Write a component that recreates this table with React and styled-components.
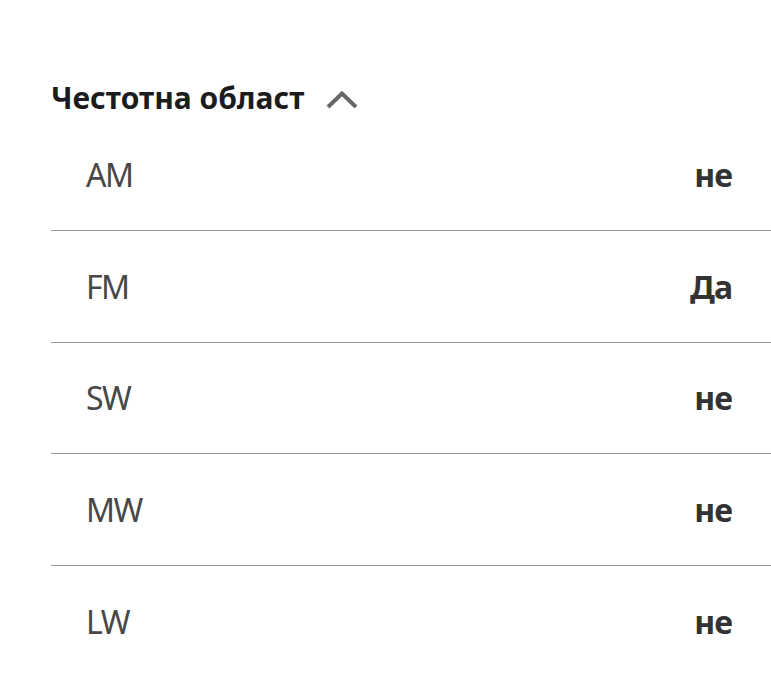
import React from 'react'
import styled, { createGlobalStyle } from 'styled-components'

const GlobalStyle = createGlobalStyle`
  body {
    margin: 0;
    background: #fff;
    font-family: 'Noto Sans', 'Open Sans', sans-serif;
  }
`

const Page = styled.div`
  padding: 80px 0 0 51px;
  width: 771px;
  height: 699px;
  box-sizing: border-box;
  overflow: hidden;
`

const Header = styled.div`
  display: flex;
  align-items: flex-start;
  gap: 22px;
  height: 39.5px;
`

const Title = styled.h2`
  margin: 0;
  font-size: 30px;
  line-height: 36px;
  font-weight: 700;
  color: #1c1c1c;
`

const Chevron = styled.svg`
  margin-top: 11px;
  color: #666;
`

const List = styled.ul`
  list-style: none;
  margin: 0;
  padding: 0;
`

const Row = styled.li`
  display: flex;
  align-items: center;
  justify-content: space-between;
  height: 111.5px;
  box-sizing: border-box;
  padding: 0 39px 0 35px;
  border-bottom: ${p => (p.last ? 'none' : '1px solid #9c9c9c')};
  font-size: 32px;
`

const Label = styled.span`
  color: #484848;
  font-weight: 400;
  letter-spacing: -1.5px;
`

const Value = styled.span`
  color: #333;
  font-weight: 700;
  letter-spacing: -1px;
`

const bands = [
  { name: 'AM', value: 'не' },
  { name: 'FM', value: 'Да' },
  { name: 'SW', value: 'не' },
  { name: 'MW', value: 'не' },
  { name: 'LW', value: 'не' },
]

const App = () => (
  <>
    <GlobalStyle />
    <Page>
      <Header>
        <Title>Честотна област</Title>
        <Chevron width="32" height="18" viewBox="0 0 32 18" fill="none">
          <polyline
            points="2,16 16,2.5 30,16"
            stroke="currentColor"
            strokeWidth="4"
          />
        </Chevron>
      </Header>
      <List>
        {bands.map((b, i) => (
          <Row key={b.name} last={i === bands.length - 1}>
            <Label>{b.name}</Label>
            <Value>{b.value}</Value>
          </Row>
        ))}
      </List>
    </Page>
  </>
)

export default App
